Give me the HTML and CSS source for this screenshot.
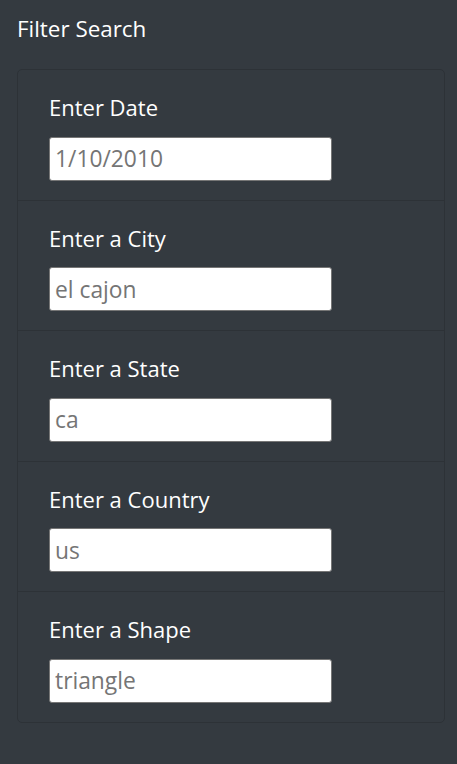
FILE: index.html
```html
<!DOCTYPE html>
<html>
<head>
<meta charset="utf-8">
<link rel="stylesheet" href="styles.css">
</head>
<body>
<div class="panel">
  <h4 class="title">Filter Search</h4>
  <ul class="filters">
    <li class="filter">
      <label class="filter-label" for="date">Enter Date</label>
      <input class="filter-input" id="date" type="text" placeholder="1/10/2010">
    </li>
    <li class="filter">
      <label class="filter-label" for="city">Enter a City</label>
      <input class="filter-input" id="city" type="text" placeholder="el cajon">
    </li>
    <li class="filter">
      <label class="filter-label" for="state">Enter a State</label>
      <input class="filter-input" id="state" type="text" placeholder="ca">
    </li>
    <li class="filter">
      <label class="filter-label" for="country">Enter a Country</label>
      <input class="filter-input" id="country" type="text" placeholder="us">
    </li>
    <li class="filter">
      <label class="filter-label" for="shape">Enter a Shape</label>
      <input class="filter-input" id="shape" type="text" placeholder="triangle">
    </li>
  </ul>
</div>
</body>
</html>
```
FILE: styles.css
```css
html, body {
  margin: 0;
  padding: 0;
  background: #343a40;
  height: 100%;
}
body {
  font-family: "Open Sans", "Noto Sans", sans-serif;
  color: #fff;
}
.panel {
  padding: 12px 12px 0 17px;
}
.title {
  margin: 0;
  font-size: 22.4px;
  font-weight: 400;
  line-height: 33px;
  height: 57px;
}
.filters {
  list-style: none;
  margin: 0;
  padding: 0;
  width: 428px;
  box-sizing: border-box;
  border: 1px solid #2d3237;
  border-radius: 5px;
}
.filter {
  padding: 18px 30px 18px 31px;
  border-top: 1px solid #2d3237;
  display: flex;
  flex-direction: column;
  align-items: flex-start;
}
.filter:first-child {
  border-top: none;
}
.filter-label {
  font-size: 22px;
  line-height: 34px;
  margin-top: 2px;
  margin-bottom: 12.6px;
}
.filter-input {
  box-sizing: border-box;
  width: 283px;
  height: 44px;
  margin: 0 0 1px;
  padding: 0 5px;
  border: 1px solid #767676;
  border-radius: 3px;
  background: #fff;
  font-family: "Open Sans", "Noto Sans", sans-serif;
  font-size: 22.8px;
  color: #333;
  outline: none;
}
.filter-input::placeholder {
  color: #757575;
  opacity: 1;
}
```
